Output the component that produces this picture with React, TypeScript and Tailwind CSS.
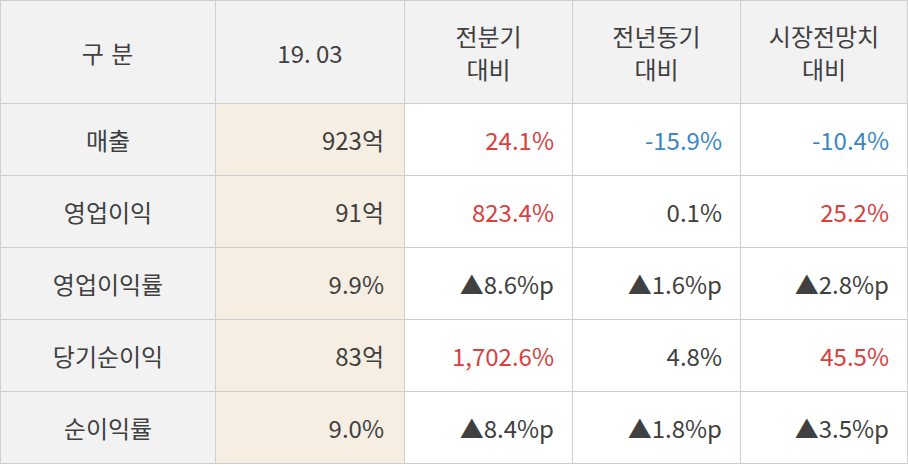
import React from "react";

type Cell = { text: string; tone?: "red" | "blue" };

const rows: { label: string; value: string; cells: Cell[] }[] = [
  { label: "매출", value: "923억", cells: [{ text: "24.1%", tone: "red" }, { text: "-15.9%", tone: "blue" }, { text: "-10.4%", tone: "blue" }] },
  { label: "영업이익", value: "91억", cells: [{ text: "823.4%", tone: "red" }, { text: "0.1%" }, { text: "25.2%", tone: "red" }] },
  { label: "영업이익률", value: "9.9%", cells: [{ text: "▲8.6%p" }, { text: "▲1.6%p" }, { text: "▲2.8%p" }] },
  { label: "당기순이익", value: "83억", cells: [{ text: "1,702.6%", tone: "red" }, { text: "4.8%" }, { text: "45.5%", tone: "red" }] },
  { label: "순이익률", value: "9.0%", cells: [{ text: "▲8.4%p" }, { text: "▲1.8%p" }, { text: "▲3.5%p" }] },
];

const toneClass = (tone?: "red" | "blue") =>
  tone === "red" ? "text-[#d8413f]" : tone === "blue" ? "text-[#3a86c6]" : "text-[#404040]";

function App() {
  return (
    <div
      className="w-[908px] bg-white text-[24px] leading-[33px] text-[#404040]"
      style={{ fontFamily: '"Noto Sans CJK KR", "Noto Sans", sans-serif' }}
    >
      <div className="grid grid-cols-[214px_188px_167px_167px_166px] grid-rows-[102px_repeat(5,71px)] gap-px bg-[#cfcfcf] p-px">
        <div className="flex items-center justify-center bg-[#f2f2f2] tracking-[1px]">구 분</div>
        <div className="flex items-center justify-center bg-[#f2f2f2]">19. 03</div>
        <div className="flex items-center justify-center bg-[#f2f2f2] text-center">전분기<br />대비</div>
        <div className="flex items-center justify-center bg-[#f2f2f2] text-center">전년동기<br />대비</div>
        <div className="flex items-center justify-center bg-[#f2f2f2] text-center">시장전망치<br />대비</div>
        {rows.map((r) => (
          <React.Fragment key={r.label}>
            <div className="flex items-center justify-center bg-[#f2f2f2]">{r.label}</div>
            <div className="flex items-center justify-end bg-[#f6eee2] pr-5">{r.value}</div>
            {r.cells.map((c, i) => (
              <div key={i} className={`flex items-center justify-end bg-white pr-[18px] ${toneClass(c.tone)}`}>
                {c.text}
              </div>
            ))}
          </React.Fragment>
        ))}
      </div>
    </div>
  );
}

export default App;
